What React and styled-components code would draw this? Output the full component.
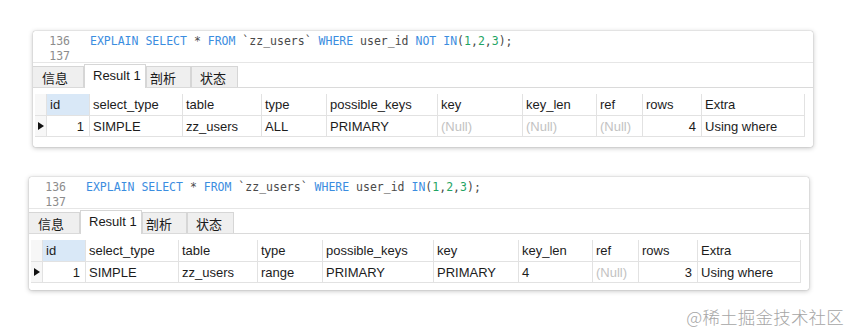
import React from "react";
import styled, { createGlobalStyle } from "styled-components";

const Global = createGlobalStyle`
  html, body { margin: 0; padding: 0; background: #ffffff; }
  body { width: 851px; height: 333px; overflow: hidden; position: relative; }
`;

const Page = styled.div`
  display: flex;
  flex-direction: column;
  gap: 30px;
  padding-top: 31px;
`;

const Panel = styled.div`
  width: ${(p) => p.$w}px;
  height: ${(p) => p.$h}px;
  margin-left: ${(p) => p.$left}px;
  background: #ffffff;
  border-radius: 2px;
  box-shadow: 0 0 1px rgba(0, 0, 0, 0.4), 0 1px 5px rgba(0, 0, 0, 0.25);
  display: flex;
  flex-direction: column;
  overflow: hidden;
  box-sizing: border-box;
`;

const Editor = styled.div`
  height: 31px;
  padding-top: 3px;
  box-sizing: border-box;
  overflow: hidden;
  font-family: "DejaVu Sans Mono", "Liberation Mono", monospace;
  font-size: 11.5px;
  line-height: 15px;
`;

const Line = styled.div`
  display: flex;
  white-space: pre;
`;

const LineNo = styled.span`
  width: 37px;
  text-align: right;
  color: #8c8c8c;
  flex: none;
`;

const Code = styled.span`
  margin-left: 20px;
  color: #4a4a4a;
`;

const Kw = styled.span`
  color: #3b8de0;
`;

const Num = styled.span`
  color: #1fa463;
`;

const TabBar = styled.div`
  height: 26px;
  box-sizing: border-box;
  border-top: 1px solid #e6e6e6;
  border-bottom: 1px solid #dadada;
  display: flex;
  align-items: flex-end;
  color: #1a1a1a;
`;

const Tab = styled.div`
  width: ${(p) => p.$w}px;
  padding-left: ${(p) => p.$pl}px;
  box-sizing: border-box;
  height: ${(p) => (p.$active ? 24 : 21)}px;
  margin-bottom: ${(p) => (p.$active ? -1 : 0)}px;
  background: ${(p) => (p.$active ? "#ffffff" : "#efefef")};
  border: 1px solid #d6d6d6;
  border-bottom: 0;
  border-left: ${(p) => (p.$first ? "none" : "1px solid #d6d6d6")};
  display: flex;
  align-items: center;
  font-family: ${(p) =>
    p.$cjk
      ? '"Noto Sans CJK SC", sans-serif'
      : '"Liberation Sans", "Noto Sans CJK SC", sans-serif'};
  font-size: ${(p) => (p.$cjk ? 13 : 13)}px;
  padding-bottom: ${(p) => (p.$active ? 3 : 0)}px;
`;

const GridArea = styled.div`
  padding: 6px 0 0 2px;
`;

const Grid = styled.div`
  display: grid;
  grid-template-columns: ${(p) => p.$cols};
  font-family: "Liberation Sans", "Noto Sans CJK SC", sans-serif;
  font-size: 13px;
  color: #1c1c1c;
  width: max-content;
`;

const Gutter = styled.div`
  height: ${(p) => p.$h}px;
  background: #f7f7f7;
  border-bottom: 1px solid #e2e2e2;
  border-right: 1px solid #e2e2e2;
  box-sizing: border-box;
  display: flex;
  align-items: center;
  padding-left: 3px;
`;

const Arrow = styled.div`
  width: 0;
  height: 0;
  border-top: 4.5px solid transparent;
  border-bottom: 4.5px solid transparent;
  border-left: 6px solid #111;
`;

const Cell = styled.div`
  height: ${(p) => p.$h}px;
  box-sizing: border-box;
  border-right: 1px solid #e2e2e2;
  border-bottom: 1px solid #e2e2e2;
  background: ${(p) => (p.$hl ? "#d9e8f7" : "#ffffff")};
  color: ${(p) => (p.$null ? "#c2c2c2" : "#1c1c1c")};
  display: flex;
  align-items: center;
  justify-content: ${(p) => (p.$right ? "flex-end" : "flex-start")};
  padding: 0 ${(p) => (p.$right ? 5 : 2)}px 0 3px;
  white-space: nowrap;
  overflow: hidden;
`;

const Watermark = styled.div`
  position: absolute;
  right: 7px;
  top: 304px;
  font-family: "Noto Sans CJK SC", sans-serif;
  font-size: 17.5px;
  font-weight: 300;
  color: #a6a6a6;
  letter-spacing: 0.2px;
`;

const COLS = "12px 43px 93px 79px 65px 111px 85px 74px 46px 59px 103px";
const HEAD = ["id", "select_type", "table", "type", "possible_keys", "key", "key_len", "ref", "rows", "Extra"];

function ResultPanel({ left, not, row, h }) {
  return (
    <Panel $w={780} $h={h} $left={left}>
      <Editor>
        <Line>
          <LineNo>136</LineNo>
          <Code>
            <Kw>EXPLAIN</Kw> <Kw>SELECT</Kw> * <Kw>FROM</Kw> `zz_users` <Kw>WHERE</Kw> user_id{" "}
            {not ? (
              <>
                <Kw>NOT</Kw>{" "}
              </>
            ) : null}
            <Kw>IN</Kw>(<Num>1</Num>,<Num>2</Num>,<Num>3</Num>);
          </Code>
        </Line>
        <Line>
          <LineNo>137</LineNo>
        </Line>
      </Editor>
      <TabBar>
        <Tab $w={51} $pl={9} $first $cjk>信息</Tab>
        <Tab $w={62} $pl={8} $active>Result 1</Tab>
        <Tab $w={45} $pl={3} $cjk>剖析</Tab>
        <Tab $w={47} $pl={8} $cjk>状态</Tab>
      </TabBar>
      <GridArea>
        <Grid $cols={COLS}>
          <Gutter $h={22} />
          {HEAD.map((t, i) => (
            <Cell key={t} $h={22} $hl={i === 0}>
              {t}
            </Cell>
          ))}
          <Gutter $h={21}>
            <Arrow />
          </Gutter>
          {row.map((c, i) => (
            <Cell key={i} $h={21} $right={c.r} $null={c.v === "(Null)"}>
              {c.v}
            </Cell>
          ))}
        </Grid>
      </GridArea>
    </Panel>
  );
}

const row1 = [
  { v: "1", r: true },
  { v: "SIMPLE" },
  { v: "zz_users" },
  { v: "ALL" },
  { v: "PRIMARY" },
  { v: "(Null)" },
  { v: "(Null)" },
  { v: "(Null)" },
  { v: "4", r: true },
  { v: "Using where" },
];

const row2 = [
  { v: "1", r: true },
  { v: "SIMPLE" },
  { v: "zz_users" },
  { v: "range" },
  { v: "PRIMARY" },
  { v: "PRIMARY" },
  { v: "4" },
  { v: "(Null)" },
  { v: "3", r: true },
  { v: "Using where" },
];

export default function App() {
  return (
    <>
      <Global />
      <Page>
        <ResultPanel left={33} not row={row1} h={116} />
        <ResultPanel left={29} row={row2} h={113} />
      </Page>
      <Watermark>@稀土掘金技术社区</Watermark>
    </>
  );
}
